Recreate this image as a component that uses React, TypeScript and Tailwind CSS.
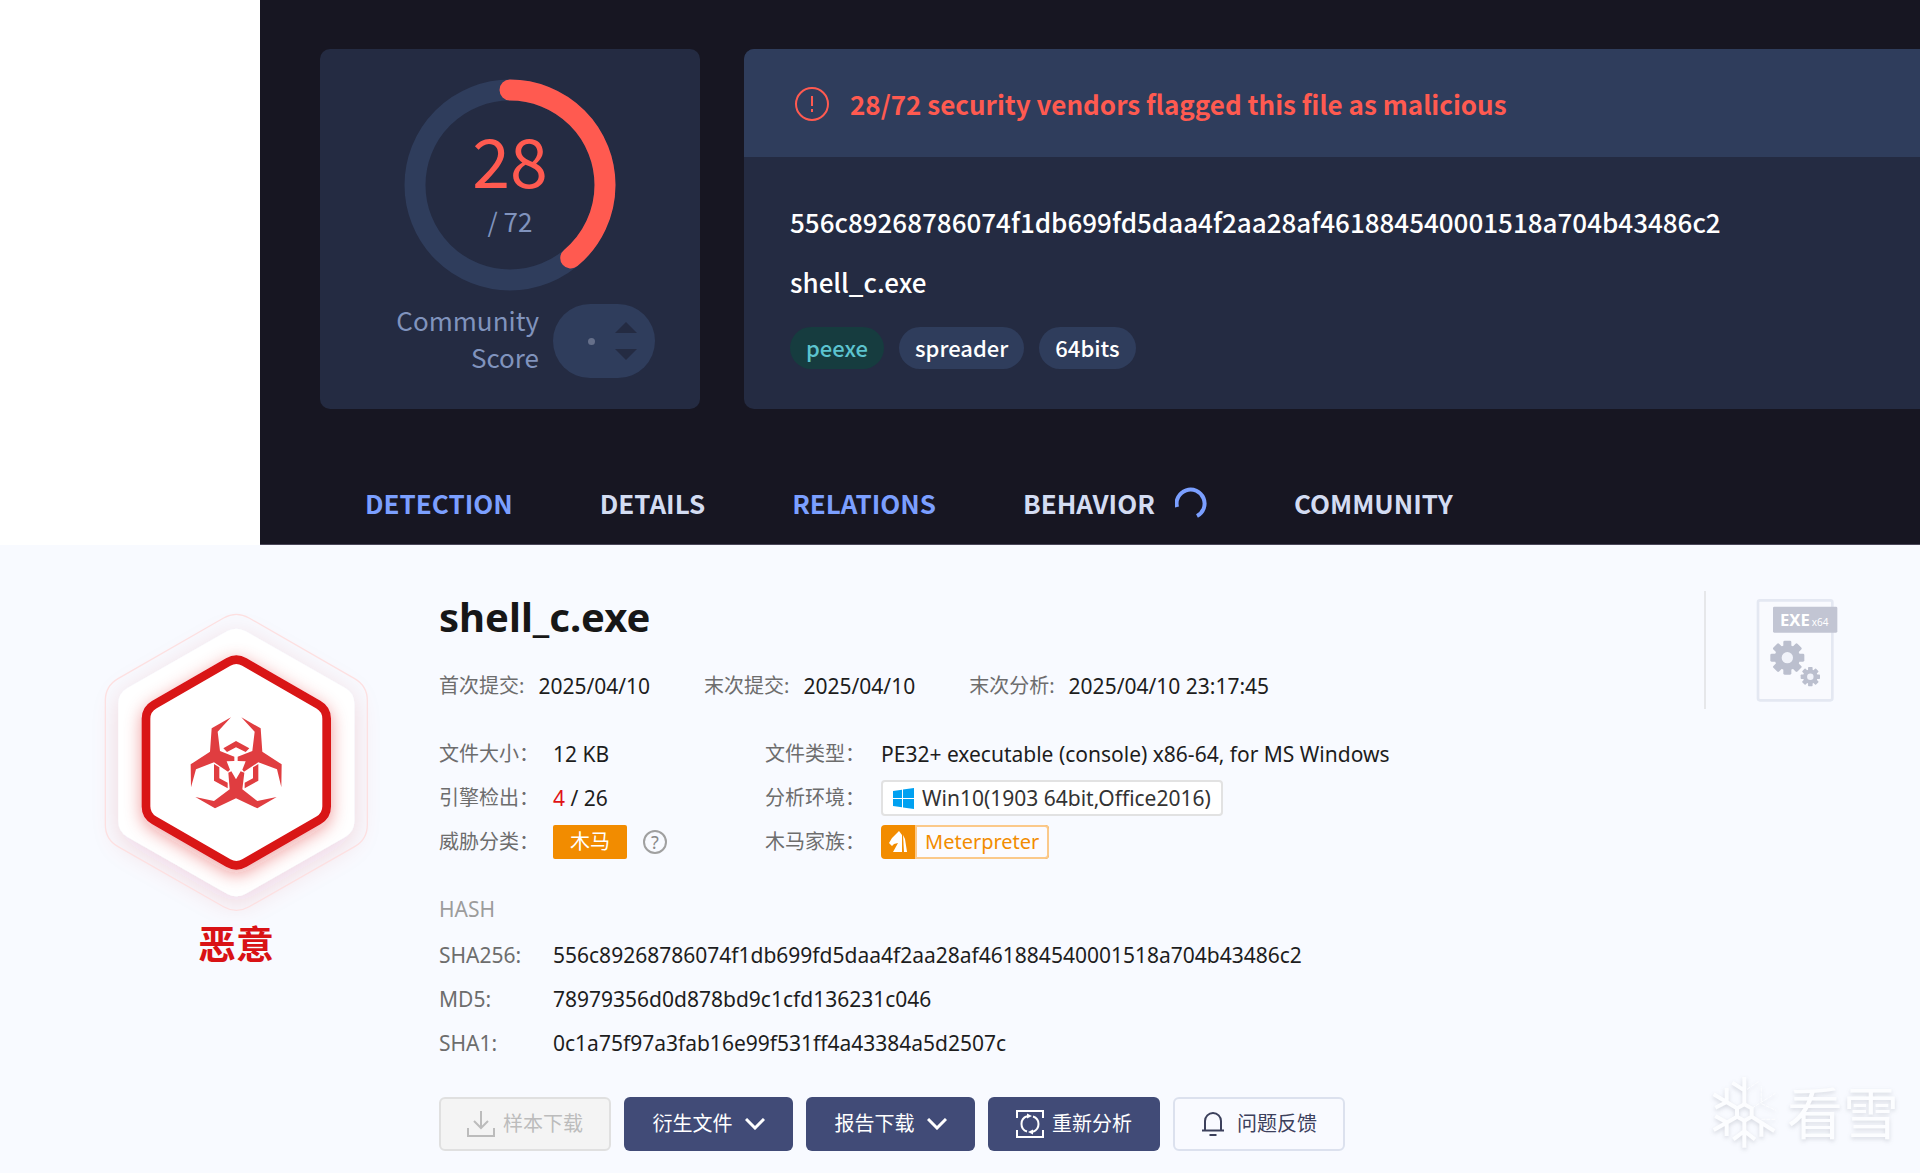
import React from "react";
import clsx from "clsx";

type Point = [number, number];

interface HexProps {
  left: number;
  right: number;
  top: number;
  bottom: number;
  upper: number;
  lower: number;
}

// Hexagon standing on a corner, with every corner rounded off
const hexPath = ({ left, right, top, bottom, upper, lower }: HexProps, r = 28) => {
  const mid = (left + right) / 2;
  const pts: Point[] = [
    [mid, top],
    [right, upper],
    [right, lower],
    [mid, bottom],
    [left, lower],
    [left, upper],
  ];
  const step = (a: Point, b: Point): Point => {
    const len = Math.hypot(b[0] - a[0], b[1] - a[1]);
    return [a[0] + ((b[0] - a[0]) * r) / len, a[1] + ((b[1] - a[1]) * r) / len];
  };
  const parts = pts.map((p, i) => {
    const prev = pts[(i + 5) % 6];
    const next = pts[(i + 1) % 6];
    return `${i === 0 ? "M" : "L"}${step(p, prev).join(" ")} Q${p.join(" ")} ${step(p, next).join(" ")}`;
  });
  return parts.join(" ") + "Z";
};

const ThreatBadge = () => (
  <svg viewBox="48 54 840 960" className="w-[280px] h-[320px] overflow-visible" aria-hidden="true">
    <defs>
      <filter id="outerGlow" x="-30%" y="-30%" width="160%" height="160%">
        <feDropShadow dx="0" dy="20" stdDeviation="38" floodColor="#c81430" floodOpacity="0.14" />
      </filter>
      <filter id="innerGlow" x="-30%" y="-30%" width="160%" height="160%">
        <feDropShadow dx="0" dy="14" stdDeviation="26" floodColor="#d81414" floodOpacity="0.4" />
      </filter>
      <clipPath id="whiteHex">
        <path d={hexPath({ left: 115, right: 823, top: 108, bottom: 927, upper: 310, lower: 725 }, 32)} />
      </clipPath>
    </defs>
    <path
      d={hexPath({ left: 115, right: 823, top: 108, bottom: 927, upper: 310, lower: 725 }, 32)}
      fill="#fff"
      filter="url(#outerGlow)"
    />
    <path
      d={hexPath({ left: 76, right: 862, top: 62, bottom: 972, upper: 288, lower: 748 }, 44)}
      fill="none"
      stroke="#fde0e1"
      strokeWidth="4"
    />
    <g clipPath="url(#whiteHex)">
      <path
        d={hexPath({ left: 198, right: 740, top: 202, bottom: 833, upper: 358, lower: 677 })}
        fill="#fff"
        stroke="#d91215"
        strokeWidth="26"
        filter="url(#innerGlow)"
      />
    </g>
    <g fill="#e03d40">
      <path d="M453 382 395 415 390 485 332 523 333 592 348 538 402 517 444 545 450 539 440 514 463 513 463 500 420 483 413 425Z" />
      <path d="M484 382 542 415 547 485 605 523 604 592 591 538 535 517 492 545 487 539 497 514 473 513 473 500 517 483 524 425Z" />
      <path d="M346 621 402 633 449 598 445 548 454 544 468 568 482 544 493 548 487 598 532 633 590 621 532 655 468 625 405 655Z" />
      <path d="M430 475 468 453 508 475 497 486 468 472 441 486Z" />
      <path d="M402 522 418 532 418 565 443 578 443 595 402 572Z" />
      <path d="M535 522 519 532 519 565 494 578 494 595 535 572Z" />
    </g>
  </svg>
);

const ScoreRing = ({ value, total }: { value: number; total: number }) => {
  const length = 2 * Math.PI * 95;
  return (
    <div className="relative size-[212px]">
      <svg viewBox="0 0 212 212" fill="none" strokeWidth="21" className="size-full -rotate-90" aria-hidden="true">
        <circle cx="106" cy="106" r="95" stroke="#2f3d5c" />
        <circle
          cx="106"
          cy="106"
          r="95"
          stroke="#ff5a50"
          strokeLinecap="round"
          strokeDasharray={`${(length * value) / total} ${length}`}
        />
      </svg>
      <div className="absolute inset-0 flex flex-col items-center pt-11">
        <span className="text-[68px] leading-[72px] text-[#ff5a50]">{value}</span>
        <span className="text-[26px] leading-[52px] text-[#8093bd]">/ {total}</span>
      </div>
    </div>
  );
};

const Gear = ({ x, y, r, fill }: { x: number; y: number; r: number; fill: string }) => (
  <g transform={`translate(${x} ${y}) scale(${r / 51})`} fill={fill}>
    {[0, 45, 90, 135].map((angle) => (
      <rect key={angle} x="-12" y="-51" width="24" height="102" rx="4" transform={`rotate(${angle})`} />
    ))}
    <circle r="38" />
    <circle r="17" fill="#f1f3fa" />
  </g>
);

const FileTypeIcon = () => (
  <svg viewBox="228 84 246 312" className="w-[82px] h-[104px]" role="img" aria-label="EXE x64">
    <rect x="234" y="91" width="223" height="300" rx="6" fill="#f9fafe" stroke="#e4e8f2" strokeWidth="8" />
    <rect x="279" y="110" width="193" height="78" rx="4" fill="#c2c5d3" />
    <text x="300" y="167" fontSize="50" fontWeight="700" fill="#fff" fontFamily="Noto Sans, sans-serif">
      EXE
    </text>
    <text x="395" y="167" fontSize="30" fill="#fff" fontFamily="Noto Sans, sans-serif">
      x64
    </text>
    <Gear x={322} y={263} r={51} fill="#bbbfce" />
    <Gear x={391} y={320} r={29} fill="#bbbfce" />
  </svg>
);

const Watermark = () => (
  <div className="absolute right-[21px] bottom-6 flex items-center gap-2 text-[#fcfdff] drop-shadow-[0_2px_2px_rgba(60,65,85,0.18)]" aria-hidden="true">
    <svg viewBox="90 72 204 222" fill="none" stroke="currentColor" strokeWidth="12" className="w-[68px] h-[74px]">
      <path d="M190 160 212 172V197L190 209 168 197V172Z" />
      <path d="M190 160V78M190 118 154 95M190 209V290M190 240 157 265M190 240 222 265" />
      <path d="M168 172 98 130M137 153V110M137 153 103 170" />
      <path d="M168 197 98 237M137 214V255M137 214 103 195" />
      <path d="M212 197 280 240M241 215V257" />
      <path d="M212 172 283 127M241 152V105M241 158 285 178M198 115 232 92M241 205 285 205" strokeWidth="3" strokeDasharray="12 3" />
    </svg>
    <span className="text-[56px] leading-[64px] font-normal">看雪</span>
  </div>
);

const ChevronIcon = () => (
  <svg viewBox="0 0 20 12" fill="none" stroke="currentColor" strokeWidth="3" className="w-5 h-3" aria-hidden="true">
    <path d="m1 1 9 9 9-9" />
  </svg>
);

const DownloadIcon = () => (
  <svg viewBox="0 0 28 28" fill="none" stroke="currentColor" strokeWidth="2" className="size-7" aria-hidden="true">
    <path d="M14 1v17M7 11l7 7 7-7M1 18v8h26v-8" />
  </svg>
);

const ReanalyzeIcon = () => (
  <svg viewBox="0 0 28 28" fill="none" stroke="currentColor" strokeWidth="2" className="size-7" aria-hidden="true">
    <path d="M1 8V1h26v7M1 20v7h26v-7" />
    <path d="M11 21.500a8 8 0 0 1 0-15.200M17 6.500a8 8 0 0 1 0 15.200" />
    <path d="M11 3.500v5l5-2.500zM17 19.500v5L12 22z" fill="currentColor" stroke="none" />
  </svg>
);

const BellIcon = () => (
  <svg viewBox="0 0 24 26" fill="none" stroke="currentColor" strokeWidth="2" className="w-6 h-[26px]" aria-hidden="true">
    <path d="M4 19V10a8 8 0 0 1 16 0v9M1 19.500h22M8.500 24h7" />
  </svg>
);

const WindowsIcon = () => (
  <svg viewBox="0 0 21 21" fill="#00a1f1" className="size-[21px]" aria-hidden="true">
    <path d="M0 3 9 1.700V10H0zM10 1.500 21 0v10H10zM0 11h9v8.300L0 18zM10 11h11v10l-11-1.500z" />
  </svg>
);

const HorseIcon = () => (
  <svg viewBox="0 0 18 22" fill="#fff" className="w-[18px] h-[22px]" aria-hidden="true">
    <path d="M10 0 13 4v17H4l5-9-4 1-2 2-3-3 3-5z" />
    <path d="M14 4l2 4 2 13h-3z" />
  </svg>
);

const tabs = [
  { name: "DETECTION", active: true },
  { name: "DETAILS" },
  { name: "RELATIONS", active: true },
  { name: "BEHAVIOR", loading: true },
  { name: "COMMUNITY" },
];

const tags = ["peexe", "spreader", "64bits"];

const dates = [
  { label: "首次提交:", value: "2025/04/10" },
  { label: "末次提交:", value: "2025/04/10" },
  { label: "末次分析:", value: "2025/04/10 23:17:45" },
];

const hashes = [
  { label: "SHA256:", value: "556c89268786074f1db699fd5daa4f2aa28af461884540001518a704b43486c2" },
  { label: "MD5:", value: "78979356d0d878bd9c1cfd136231c046" },
  { label: "SHA1:", value: "0c1a75f97a3fab16e99f531ff4a43384a5d2507c" },
];

const VirusTotalPanel = () => (
  <section className="flex bg-white font-['Noto_Sans_CJK_SC',sans-serif]">
    <div className="w-[260px] shrink-0" />
    <div className="flex-1 min-w-0 bg-[#171622] pt-[49px] pl-[60px] border-b border-[#4a4658]">
      <div className="flex gap-11">
        <div className="w-[380px] h-[360px] shrink-0 rounded-[10px] bg-[#242b42] pt-[30px] flex flex-col items-center">
          <ScoreRing value={28} total={72} />
          <div className="mt-[10px] flex items-center gap-[14px] text-[26px] leading-[37px] text-[#8093bd] self-end pr-[45px]">
            <div className="text-right pb-1.5">
              Community
              <br />
              Score
            </div>
            <div className="w-[102px] h-[74px] rounded-full bg-[#2f3d5c] flex items-center justify-end gap-5 pr-[18px]">
              <span className="size-[7px] rounded-full bg-[#66708a]" />
              <div className="flex flex-col gap-4">
                <button type="button" aria-label="Vote up">
                  <svg viewBox="0 0 22 11" className="w-[22px] h-[11px]" fill="#242b42">
                    <path d="M0 11 11 0l11 11z" />
                  </svg>
                </button>
                <button type="button" aria-label="Vote down">
                  <svg viewBox="0 0 22 11" className="w-[22px] h-[11px]" fill="#242b42">
                    <path d="M0 0h22L11 11z" />
                  </svg>
                </button>
              </div>
            </div>
          </div>
        </div>

        <div className="flex-1 min-w-0 rounded-l-[10px] bg-[#242b42] overflow-hidden">
          <div className="h-[108px] pt-[2px] bg-[#2f3d5c] pl-[50px] flex items-center gap-5 text-[#ff5a50]">
            <svg viewBox="0 0 36 36" fill="none" stroke="currentColor" strokeWidth="2" className="size-9" aria-hidden="true">
              <circle cx="18" cy="18" r="16" />
              <path d="M18 10v10M18 23v3" />
            </svg>
            <p className="text-[26px] leading-[40px] font-bold">28/72 security vendors flagged this file as malicious</p>
          </div>
          <div className="pl-[46px] pt-[35px] text-[26px] text-white font-medium">
            <p className="leading-[60px]">556c89268786074f1db699fd5daa4f2aa28af461884540001518a704b43486c2</p>
            <p className="leading-[60px]">shell_c.exe</p>
            <div className="mt-[15px] flex gap-[15px] text-[22px]">
              {tags.map((tag, i) => (
                <a
                  key={tag}
                  href="#"
                  className={clsx(
                    "h-[42px] px-4 rounded-full leading-[40px]",
                    i === 0 ? "bg-[#163c3f] text-[#5cc3cf]" : "bg-[#2f3d5c]"
                  )}
                >
                  {tag}
                </a>
              ))}
            </div>
          </div>
        </div>
      </div>

      <nav className="h-[135px] pt-[54px] pl-[45px] flex gap-[87px] text-[26px] leading-[80px] font-bold">
        {tabs.map((tab) => (
          <a
            key={tab.name}
            href="#"
            className={clsx("h-20 flex items-center gap-5", tab.active ? "text-[#7b9fff]" : "text-[#d3dcf2]")}
          >
            {tab.name}
            {tab.loading && (
              <svg viewBox="0 0 32 32" fill="none" stroke="#7b9fff" strokeWidth="4" className="size-8" aria-hidden="true">
                <path d="M2 20A14 14 0 1 1 22 29" />
              </svg>
            )}
          </a>
        ))}
      </nav>
    </div>
  </section>
);

const SandboxPanel = () => {
  const buttonClass = "h-[54px] rounded-md flex items-center justify-center";
  const labelClass = "text-xl leading-[44px] text-[#6d6d6d]";

  return (
    <section className="relative flex-1 flex items-start bg-[#f8faff] font-['Noto_Sans','Noto_Sans_CJK_SC',sans-serif] text-xl text-[#1d1d1d]">
      <div className="w-[439px] shrink-0 pt-[63px] pl-24">
        <div className="w-[280px] flex flex-col items-center">
          <ThreatBadge />
          <strong className="-mt-2.5 text-[38px] leading-[50px] text-[#d91215]">恶意</strong>
        </div>
      </div>

      <div className="pt-11 pb-[22px]">
        <h1 className="text-[40px] leading-[56px] font-bold text-[#171717]">shell_c.exe</h1>
        <dl className="mt-[19px] flex gap-[54px] text-[21px] leading-[44px]">
          {dates.map((item) => (
            <div key={item.label} className="flex gap-[14px]">
              <dt className={labelClass}>{item.label}</dt>
              <dd>{item.value}</dd>
            </div>
          ))}
        </dl>

        <dl className="mt-6 grid grid-cols-[114px_212px_116px_auto] text-[21px] leading-[44px]">
          <dt className={labelClass}>文件大小：</dt>
          <dd>12 KB</dd>
          <dt className={labelClass}>文件类型：</dt>
          <dd>PE32+ executable (console) x86-64, for MS Windows</dd>

          <dt className={labelClass}>引擎检出：</dt>
          <dd>
            <span className="text-[#e01216]">4</span> / 26
          </dd>
          <dt className={labelClass}>分析环境：</dt>
          <dd className="flex items-center">
            <span className="h-9 px-[10px] flex items-center gap-2 bg-white border-2 border-[#e2e2e2] rounded-sm text-[#333]">
              <WindowsIcon />
              Win10(1903 64bit,Office2016)
            </span>
          </dd>

          <dt className={labelClass}>威胁分类：</dt>
          <dd className="flex items-center gap-4 text-xl">
            <span className="h-[34px] px-[17px] leading-[34px] rounded-xs bg-[#f28c00] text-white">木马</span>
            <button
              type="button"
              aria-label="Help"
              className="size-6 rounded-full border-2 border-[#a0a0a0] text-[#8a8a8a] text-lg leading-5"
            >
              ?
            </button>
          </dd>
          <dt className={labelClass}>木马家族：</dt>
          <dd className="flex items-center text-xl">
            <span className="h-[34px] flex items-center rounded-sm bg-[#f28c00] text-[#f28c00]">
              <span className="px-2">
                <HorseIcon />
              </span>
              <span className="h-full px-2 leading-[30px] border-2 border-[#fbc98a] bg-[#fbfbff] rounded-r-sm">Meterpreter</span>
            </span>
          </dd>
        </dl>

        <h2 className="mt-6 mb-[3px] text-[21px] leading-[42px] text-[#9c9c9c]">HASH</h2>
        <dl className="grid grid-cols-[114px_auto] text-[21px] leading-[44px]">
          {hashes.map((item) => (
            <React.Fragment key={item.label}>
              <dt className="text-[#6d6d6d]">{item.label}</dt>
              <dd>{item.value}</dd>
            </React.Fragment>
          ))}
        </dl>

        <div className="mt-8 flex gap-[13px] text-white">
          <button type="button" disabled className={clsx(buttonClass, "w-[172px] gap-2 bg-[#f4f4f4] border-2 border-[#e0e0e0] text-[#bcbcbc]")}>
            <DownloadIcon />
            样本下载
          </button>
          <button type="button" aria-haspopup="menu" className={clsx(buttonClass, "w-[169px] gap-3 bg-[#414b77]")}>
            衍生文件
            <ChevronIcon />
          </button>
          <button type="button" aria-haspopup="menu" className={clsx(buttonClass, "w-[169px] gap-3 bg-[#414b77]")}>
            报告下载
            <ChevronIcon />
          </button>
          <button type="button" className={clsx(buttonClass, "w-[172px] gap-2 bg-[#414b77]")}>
            <ReanalyzeIcon />
            重新分析
          </button>
          <button type="button" className={clsx(buttonClass, "w-[172px] gap-3 bg-[#f9faff] border-2 border-[#dce1ee] text-[#3c405c]")}>
            <BellIcon />
            问题反馈
          </button>
        </div>
      </div>

      <div className="ml-auto mt-[46px] mr-[82px] h-[118px] pl-[50px] border-l-2 border-[#e6e7ea] flex items-center">
        <FileTypeIcon />
      </div>
      <Watermark />
    </section>
  );
};

export default function App() {
  return (
    <main className="min-h-screen flex flex-col">
      <VirusTotalPanel />
      <SandboxPanel />
    </main>
  );
}
